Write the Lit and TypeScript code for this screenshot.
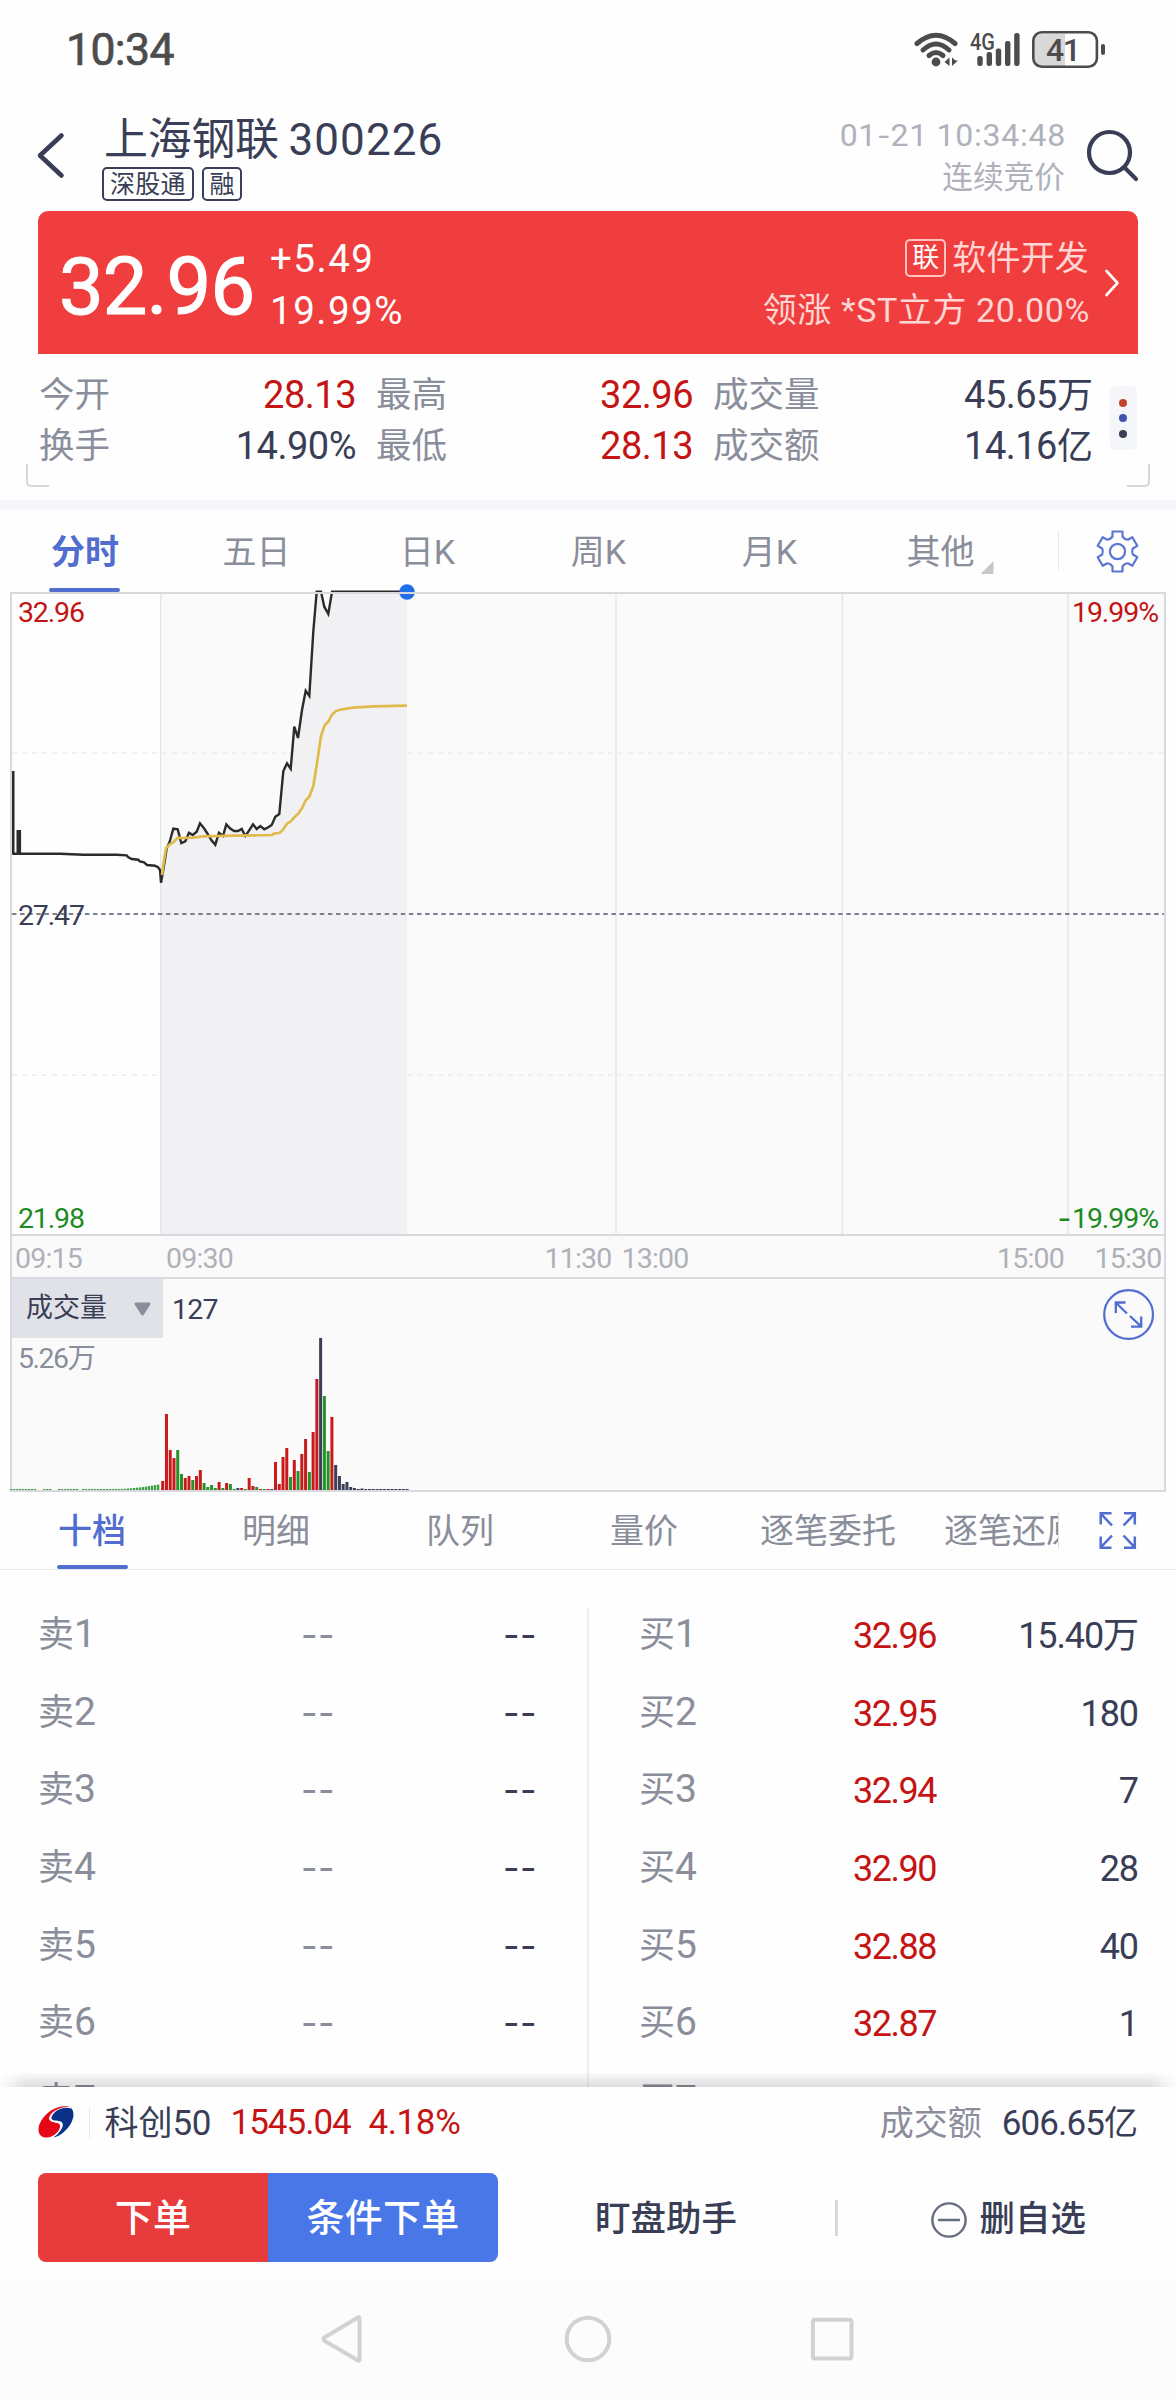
import { LitElement, html, svg, css } from "lit";
import { customElement } from "lit/decorators.js";

const BASE_FONT = css`
  font-family: Roboto, "Noto Sans CJK SC", "Liberation Sans", sans-serif;
`;

/* ---------- data ---------- */

const PRICE: [number, number][] = [
  [483, 908], [491, 862], [500, 805], [509, 785], [520, 746], [533, 748], [544, 789], [556, 784], [567, 758],
  [578, 765], [590, 755], [600, 730], [612, 745], [623, 762], [634, 780], [646, 794], [657, 758],
  [669, 768], [679, 733], [690, 745], [702, 753], [714, 753], [725, 747], [736, 768], [747, 752],
  [759, 733], [770, 747], [781, 738], [793, 748], [805, 742], [815, 735], [826, 710], [838, 702],
  [850, 574], [861, 550], [872, 566], [883, 440], [894, 474], [906, 390], [917, 332], [928, 348],
  [940, 155], [950, 35], [963, 35], [973, 80], [985, 102], [996, 35], [1221, 35],
];
const OPENING: [number, number][] = [
  [37, 821], [180, 821], [250, 824], [350, 824], [380, 826], [384, 831], [395, 837], [415, 839],
  [419, 844], [432, 847], [441, 855], [465, 857], [474, 862], [480, 870], [483, 908],
];
const AVERAGE: [number, number][] = [
  [486, 885], [492, 840], [498, 805], [510, 793], [523, 784], [533, 773], [545, 774], [580, 773], [610, 769],
  [700, 767], [815, 765], [826, 760], [838, 759], [848, 750], [861, 731], [872, 724], [883, 712],
  [894, 702], [906, 685], [917, 661], [928, 650], [940, 618], [951, 550], [963, 468], [974, 436],
  [985, 425], [996, 404], [1008, 393], [1025, 388], [1060, 383], [1120, 379], [1221, 377],
];
/* Series are stored in thirds of a pixel; the plot starts 12 px below their origin row. */
const toPoints = (s: [number, number][]) =>
  s.map(([x, y]) => `${(x / 3).toFixed(1)},${(y / 3 - 12).toFixed(1)}`).join(" ");

type Tone = "r" | "g" | "d";
const VOLUME: [Tone, number][] = [
  ["r", 9], ["r", 76], ["r", 40], ["r", 32], ["g", 40], ["g", 16], ["r", 12], ["r", 14], ["g", 10],
  ["r", 14], ["r", 20], ["g", 7], ["g", 3], ["g", 5], ["g", 2], ["r", 8], ["g", 2], ["r", 7], ["g", 6],
  ["g", 1], ["d", 2], ["r", 2], ["g", 1], ["r", 12], ["r", 4], ["g", 3], ["r", 1], ["g", 1], ["r", 1],
  ["d", 1], ["r", 28], ["r", 6], ["r", 33], ["r", 42], ["g", 13], ["r", 30], ["g", 19], ["r", 36],
  ["r", 51], ["g", 18], ["r", 58], ["r", 111], ["d", 152], ["g", 94], ["g", 39], ["r", 73], ["d", 25],
  ["d", 14], ["d", 6], ["d", 8], ["d", 3], ["d", 2], ["d", 1], ["d", 1.5], ["d", 1], ["d", 1], ["d", 1],
  ["d", 1], ["d", 1], ["d", 1], ["d", 1], ["d", 1], ["d", 1], ["d", 1], ["d", 1], ["d", 1],
];
const TONES: Record<Tone, string> = { r: "#c81a1a", g: "#25922a", d: "#3b4058" };

const BIDS = [
  ["32.96", "15.40万"], ["32.95", "180"], ["32.94", "7"], ["32.90", "28"],
  ["32.88", "40"], ["32.87", "1"],
];

/* ---------- status bar ---------- */

@customElement("status-bar")
class StatusBar extends LitElement {
  static styles = css`
    :host { display: flex; height: 100px; align-items: center; color: #4c4c4c; ${BASE_FONT} }
    .clock { flex: 1; padding-left: 66px; font-size: 44.5px; line-height: 102px; letter-spacing: -0.6px; -webkit-text-stroke: 0.7px #4c4c4c; }
    .icons { width: 262px; height: 100px; }
  `;
  render() {
    return html`
      <div class="clock">10:34</div>
      <svg class="icons" viewBox="914 0 262 100" fill="#4c4c4c">
        <g fill="none" stroke="#4c4c4c" stroke-width="5" stroke-linecap="round">
          <path d="M917 43.5 Q936 27 955 43.5" />
          <path d="M923 50 Q936 38 949 50" />
          <path d="M929 55.5 Q936 49.5 943 55.5" />
        </g>
        <circle cx="936" cy="62" r="4.4" />
        <path d="M949.5 57.5 V66 L944.5 62 Z M952 57.5 V66 L958 60.5 H955.5 Z" />
        <text x="970" y="49.5" font-family="Roboto" font-weight="500" font-size="23" textLength="25" lengthAdjust="spacingAndGlyphs">4G</text>
        <rect x="977.3" y="56" width="5.4" height="10" rx="2.2" />
        <rect x="986.6" y="52" width="5.4" height="14" rx="2.2" />
        <rect x="995.8" y="48.5" width="5.4" height="17.5" rx="2.2" />
        <rect x="1005" y="41" width="5.4" height="25" rx="2.2" />
        <rect x="1014.2" y="33" width="5.4" height="33" rx="2.2" />
        <path d="M1042 34 H1065 V66 H1042 Q1034 66 1034 58 V42 Q1034 34 1042 34Z" fill="#d8d8d8" />
        <rect x="1033.3" y="32.3" width="63.6" height="34.4" rx="8.5" fill="none" stroke="#4c4c4c" stroke-width="2.6" />
        <rect x="1101" y="44" width="4" height="11" rx="2" />
        <text x="1046" y="61" font-family="Roboto" font-weight="500" font-size="32" textLength="35">41</text>
      </svg>
    `;
  }
}

/* ---------- title row ---------- */

@customElement("stock-header")
class StockHeader extends LitElement {
  static styles = css`
    :host { display: flex; height: 111px; color: #393e56; ${BASE_FONT} }
    .back { width: 102px; height: 111px; }
    .main { flex: 1; }
    .name { height: 51px; padding: 14px 0 0 2px; font-size: 44px; line-height: 52px; letter-spacing: -0.3px; white-space: nowrap; }
    .code { letter-spacing: 1.1px; margin-left: -1px; }
    .tags { display: flex; gap: 8px; margin-top: 2px; }
    .tag { box-sizing: border-box; height: 34px; padding: 0 6px; border: 2px solid #393e56; border-radius: 5px;
      font-size: 25px; line-height: 31px; letter-spacing: 0.3px; }
    .tag.s { letter-spacing: 0; padding: 0 5.5px; }
    .when { display: flex; flex-direction: column; align-items: flex-end; color: #afb1bb; white-space: nowrap; }
    .time { margin: 14px -1px 0 0; font-size: 32px; line-height: 42px; letter-spacing: 0.75px; }
    .dash { font-family: Inter, sans-serif; font-size: 29px; letter-spacing: 0; }
    .phase { font-size: 30.7px; line-height: 42px; }
    .search { width: 111px; height: 111px; }
  `;
  render() {
    return html`
      <svg class="back" viewBox="0 100 102 111">
        <path d="M61.5 135.5 L40 155.5 L61.5 175.5" fill="none" stroke="#393e56" stroke-width="4.6" stroke-linecap="round" stroke-linejoin="round" />
      </svg>
      <div class="main">
        <div class="name">上海钢联 <span class="code">300226</span></div>
        <div class="tags"><span class="tag">深股通</span><span class="tag s">融</span></div>
      </div>
      <div class="when">
        <div class="time">01<span class="dash">-</span>21 10:34:48</div>
        <div class="phase">连续竞价</div>
      </div>
      <svg class="search" viewBox="1065 100 111 111" fill="none" stroke="#393e56" stroke-width="4.2" stroke-linecap="round">
        <circle cx="1109.5" cy="152.5" r="20.5" />
        <path d="M1124.5 167.5 L1136 179" />
      </svg>
    `;
  }
}

/* ---------- price card and key figures ---------- */

@customElement("quote-card")
class QuoteCard extends LitElement {
  static styles = css`
    :host { display: block; position: relative; height: 289px; color: #393e56; ${BASE_FONT} }
    .card { display: flex; box-sizing: border-box; height: 143px; margin: 0 38px; padding-left: 21px;
      background: #ef3e3d; color: #fff; border-radius: 10px 10px 0 0; white-space: nowrap; }
    .price { width: 211px; font-size: 79.5px; line-height: 151px; letter-spacing: -0.9px; -webkit-text-stroke: 1.1px #fff; }
    .delta { flex: 1; padding-top: 22px; font-size: 38.5px; line-height: 52px; letter-spacing: 1.5px; }
    .sector { padding-top: 21px; text-align: right; color: #ffd6d3; font-size: 34px; line-height: 52px; }
    .sector-name { display: flex; align-items: center; justify-content: flex-end; gap: 6px; height: 52px; letter-spacing: 0.2px; }
    .badge { box-sizing: border-box; width: 41px; height: 38px; border: 2px solid #ffc4c2; border-radius: 5px;
      font-size: 27px; line-height: 35px; letter-spacing: 0; color: #fff; text-align: center; }
    .lead { letter-spacing: 0.6px; margin-right: -1px; }
    .go { width: 49px; height: 143px; }
    .figures { display: grid; grid-template-columns: 317px 317px 380px; column-gap: 20px; padding: 16px 0 0 39px;
      grid-auto-rows: 51px; }
    .fig { display: flex; justify-content: space-between; font-size: 35.5px; line-height: 51px; white-space: nowrap; }
    .fig b { font-weight: 400; font-size: 38px; letter-spacing: -0.5px; }
    .fig i { font-style: normal; font-size: 36px; letter-spacing: 0; }
    .k { color: #8a8d9a; }
    .up { color: #c41413; }
    .more { position: absolute; left: 1109.5px; top: 175px; width: 27.5px; height: 64px; border-radius: 5px; background: #f5f6f9;
      display: flex; flex-direction: column; align-items: center; justify-content: center; gap: 7.5px; }
    .dot { width: 8px; height: 8px; border-radius: 50%; background: #3a3f56; }
    .dot.a { background: #c5412f; }
    .dot.b { background: #3d53ad; }
    .corner { position: absolute; box-sizing: border-box; top: 253px; width: 23px; height: 23px; border: 0 solid #d6d7dc; border-bottom-width: 2.5px; }
    .corner.l { left: 26px; border-left-width: 2.5px; border-bottom-left-radius: 5px; }
    .corner.r { left: 1127px; border-right-width: 2.5px; border-bottom-right-radius: 5px; }
  `;
  private fig(k: string, v: string, up = false, unit = "") {
    return html`<div class="fig"><span class="k">${k}</span><b class=${up ? "up" : ""}>${v}<i>${unit}</i></b></div>`;
  }
  render() {
    return html`
      <div class="card">
        <div class="price">32.96</div>
        <div class="delta"><div>+5.49</div><div>19.99%</div></div>
        <div class="sector">
          <div class="sector-name"><span class="badge">联</span><span>软件开发</span></div>
          <div class="lead">领涨 *ST立方 20.00%</div>
        </div>
        <svg class="go" viewBox="0 0 49 143">
          <path d="M17.5 60 L28.5 72 L17.5 84" fill="none" stroke="#fff" stroke-width="2.6" stroke-linecap="round" stroke-linejoin="round" />
        </svg>
      </div>
      <div class="figures">
        ${this.fig("今开", "28.13", true)}${this.fig("最高", "32.96", true)}${this.fig("成交量", "45.65", false, "万")}
        ${this.fig("换手", "14.90%")}${this.fig("最低", "28.13", true)}${this.fig("成交额", "14.16", false, "亿")}
      </div>
      <div class="more"><span class="dot a"></span><span class="dot b"></span><span class="dot"></span></div>
      <span class="corner l"></span><span class="corner r"></span>
    `;
  }
}

/* ---------- tab strips ---------- */

const gearPath = (() => {
  const at = (deg: number, r: number) => {
    const a = (deg * Math.PI) / 180;
    return `${(1117.5 + r * Math.cos(a)).toFixed(2)} ${(551.5 + r * Math.sin(a)).toFixed(2)}`;
  };
  const parts: string[] = [];
  for (let t = -90; t < 270; t += 60) {
    parts.push(`${at(t - 19, 15.6)} L${at(t - 14, 20.6)} L${at(t + 14, 20.6)} L${at(t + 19, 15.6)} Q${at(t + 30, 14)} ${at(t + 41, 15.6)}`);
  }
  return `M${parts.join(" L")}Z`;
})();

@customElement("period-tabs")
class PeriodTabs extends LitElement {
  static styles = css`
    :host { display: flex; height: 82px; border-top: 10px solid #f6f7fa; ${BASE_FONT} }
    .tabs { display: grid; grid-template-columns: repeat(6, 171px); width: 1027px; }
    .tab { position: relative; display: flex; justify-content: center; font-size: 34px; line-height: 85px; color: #8a8d9a; }
    .tab.on { color: #516dd0; font-weight: 600; padding-right: 1px; }
    .tab.on::after { content: ""; position: absolute; left: 49px; top: 78px; width: 71px; height: 4px; border-radius: 2px; background: #516dd0; }
    .mark { position: absolute; left: 125.5px; top: 51px; width: 13px; height: 13px; background: #c6c7c9; clip-path: polygon(100% 0, 100% 100%, 0 100%); }
    .tail { width: 149px; height: 82px; }
  `;
  render() {
    return html`
      <div class="tabs">
        <div class="tab on">分时</div><div class="tab">五日</div><div class="tab">日K</div>
        <div class="tab">周K</div><div class="tab">月K</div><div class="tab">其他<span class="mark"></span></div>
      </div>
      <svg class="tail" viewBox="1027 510 149 82" fill="none">
        <path d="M1058.5 532 V570" stroke="#e6e7eb" />
        <g stroke="#5b76d2" stroke-width="2.2" stroke-linejoin="round"><path d=${gearPath} /><circle cx="1117.5" cy="551.5" r="7.6" /></g>
      </svg>
    `;
  }
}

@customElement("depth-tabs")
class DepthTabs extends LitElement {
  static styles = css`
    :host { display: flex; box-sizing: border-box; height: 78px; border-bottom: 1px solid #e6e7eb; ${BASE_FONT} }
    .tabs { display: grid; grid-template-columns: repeat(6, 184px); width: 1058px; height: 77px; overflow: hidden; }
    .tab { position: relative; text-align: center; font-size: 34px; line-height: 79px; color: #8a8d9a; white-space: nowrap; }
    .tab.on { color: #516dd0; font-weight: 500; }
    .tab.on::after { content: ""; position: absolute; left: 57px; top: 73px; width: 71px; height: 4px; border-radius: 2px; background: #516dd0; }
    .tail { width: 118px; height: 77px; }
  `;
  render() {
    return html`
      <div class="tabs">
        <div class="tab on">十档</div><div class="tab">明细</div><div class="tab">队列</div>
        <div class="tab">量价</div><div class="tab">逐笔委托</div><div class="tab">逐笔还原</div>
      </div>
      <svg class="tail" viewBox="1058 1492 118 77" fill="none">
        <path d="M1058.5 1511 V1549" stroke="#dfe0e5" />
        <g stroke="#516dd0" stroke-width="2.5">
          <path d="M1111.5 1513.3 H1100.7 V1524.5 M1101 1513.8 L1112 1525.5" />
          <path d="M1124 1513.3 H1134.8 V1524.5 M1134.5 1513.8 L1123.5 1525.5" />
          <path d="M1111.5 1547.7 H1100.7 V1536.5 M1101 1547.2 L1112 1535.5" />
          <path d="M1124 1547.7 H1134.8 V1536.5 M1134.5 1547.2 L1123.5 1535.5" />
        </g>
      </svg>
    `;
  }
}

/* ---------- intraday chart ---------- */

@customElement("intraday-chart")
class IntradayChart extends LitElement {
  static styles = css`
    :host { display: block; height: 900px; ${BASE_FONT} }
    .plot { display: block; width: 1176px; height: 644px; overflow: visible; }
    .lbl { font-size: 28.5px; }
    .axis { display: flex; box-sizing: border-box; width: 1156px; height: 41px; margin-left: 10px; padding-left: 3px;
      border: solid #d8d9df; border-width: 0 2px; background: #fafafa; color: #afb1b8; font-size: 28.5px; line-height: 45px; letter-spacing: -0.8px; }
    .axis span { width: 68px; white-space: nowrap; }
    .g1 { margin-left: 83px; }
    .g2 { margin-left: 310.5px; }
    .g3 { margin-left: 9px; }
    .g4 { margin-left: 307.5px; }
    .g5 { margin-left: 29.5px; }
    .panel { box-sizing: border-box; width: 1156px; height: 215px; margin-left: 10px; border: 2px solid #d8d9df; background: #fafafa; }
    .head { display: flex; height: 59px; color: #393e56; }
    .pick { display: flex; align-items: center; justify-content: space-between; box-sizing: border-box; width: 151px; height: 59px; padding: 0 12px 0 14px;
      background: #e1e2e7; font-size: 27px; line-height: 61px; }
    .caret { width: 17px; height: 14px; }
    .val { flex: 1; padding-left: 9px; font-size: 28.5px; line-height: 61px; letter-spacing: -0.8px; }
    .zoom { width: 60px; height: 59px; overflow: visible; }
    .bars { display: block; width: 1152px; height: 152px; overflow: visible; }
  `;
  render() {
    const line = toPoints(PRICE);
    return html`
      <svg class="plot" viewBox="0 0 1176 644">
        <rect x="160.5" y="1" width="1005" height="642" fill="#fafafa" />
        <polygon points="${line} 407,642 161,642" fill="#f1f1f4" />
        <g stroke="#e3e4e8" stroke-width="1.3">
          <path d="M160.7 1V643 M616 1V643 M842.3 1V643 M1067.9 1V643" />
        </g>
        <g stroke="#ededf0" stroke-width="1.4" stroke-dasharray="5 5"><path d="M12 161H290 M408 161H1164 M12 483H160 M408 483H1164" /></g>
        <path d="M12 322H1164" stroke="#7d818f" stroke-width="1.8" stroke-dasharray="4.5 3.6" />
        <g fill="none" stroke="#2b2b2b" stroke-width="2.4" stroke-linejoin="miter">
          <path d="M13.2 179V262" stroke-width="2.6" />
          <path d="M18.8 238V262" stroke-width="4.6" />
          <polyline points=${toPoints(OPENING)} />
          <polyline points=${line} />
          <polyline points=${toPoints(AVERAGE)} stroke="#dfbb4c" stroke-width="2.7" stroke-linejoin="round" />
        </g>
        <circle cx="407" cy="0" r="7.8" fill="#1f6fea" />
        <rect x="11" y="1" width="1154" height="642" fill="none" stroke="#d8d9df" stroke-width="2" />
        <g class="lbl">
          <text x="18" y="30" fill="#c41413" textLength="67">32.96</text>
          <text x="1072" y="30" fill="#c41413" textLength="87">19.99%</text>
          <text x="18" y="333" fill="#393e56" textLength="67">27.47</text>
          <text x="18" y="636" fill="#1c8c22" textLength="67">21.98</text>
          <text x="1057.5" y="636.5" fill="#1c8c22" font-family="Inter" font-size="30">-</text>
          <text x="1072" y="636" fill="#1c8c22" textLength="87">19.99%</text>
        </g>
      </svg>
      <div class="axis">
        <span>09:15</span><span class="g1">09:30</span><span class="g2">11:30</span>
        <span class="g3">13:00</span><span class="g4">15:00</span><span class="g5">15:30</span>
      </div>
      <div class="panel">
        <div class="head">
          <div class="pick"><span>成交量</span>
            <svg class="caret" viewBox="0 0 17 14"><path d="M1.5 0.5H15.5Q17 1 16 3L10 12.5Q8.5 14.5 7 12.5L1 3Q0 1 1.5 0.5Z" fill="#8a8d9a" /></svg>
          </div>
          <div class="val">127</div>
          <svg class="zoom" viewBox="1104 1279 60 59" fill="none" stroke="#516dd0">
            <circle cx="1128.6" cy="1314.5" r="24.4" stroke-width="2.2" />
            <path d="M1125.5 1302.5H1115.8V1313 M1116 1302.8L1127 1313.5 M1131 1326.6H1141.2V1316.5 M1141 1326.4L1130 1316" stroke-width="2.3" />
          </svg>
        </div>
        <svg class="bars" viewBox="12 1338 1152 152">
          <text class="lbl" x="18" y="1368" fill="#8a8d9a" textLength="78">5.26万</text>
          ${Array.from({ length: 50 }, (_, i) => {
            const x = 10 + i * 3;
            if ((x > 36 && x < 41) || (x > 50 && x < 57) || (x > 78 && x < 82)) return "";
            const h = x < 118 ? 1 : 1 + Math.pow((x - 115) / 45, 1.8) * 5;
            return svg`<rect x=${x} y=${(1490 - h).toFixed(1)} width="2.3" height=${h.toFixed(1)} fill="#3c9f40" />`;
          })}
          ${VOLUME.map(
            ([tone, h], i) =>
              svg`<rect x=${(161.2 + 3.76 * i).toFixed(2)} y=${1490 - h} width="3" height=${h} fill=${TONES[tone]} />`,
          )}
        </svg>
      </div>
    `;
  }
}

/* ---------- order book ---------- */

@customElement("order-book")
class OrderBook extends LitElement {
  static styles = css`
    :host { display: flex; position: relative; height: 517px; overflow: hidden; ${BASE_FONT} }
    .side { box-sizing: border-box; width: 587px; padding: 26px 0 0 38px; }
    .side.buy { padding-left: 50px; }
    .split { width: 2px; height: 479px; margin-top: 38px; background: #f0f0f3; }
    .row { display: flex; height: 77.7px; font-size: 36px; line-height: 77.7px; white-space: nowrap; }
    .k { width: 215px; color: #8a8d9a; }
    .buy .k { width: 214px; }
    .k b { font-weight: 400; font-size: 39px; letter-spacing: 0.4px; }
    .none { font-family: Inter, sans-serif; color: #8a8d9a; width: 82px; padding-top: 1px; text-align: right; letter-spacing: 0.4px; }
    .none.q { flex: 1; padding-right: 50px; color: #393e56; }
    .p { width: 85px; color: #c41413; padding-top: 2px; letter-spacing: -1.5px; }
    .q2 { flex: 1; padding: 2px 38px 0 0; text-align: right; color: #393e56; letter-spacing: -1.1px; }
    .fade { position: absolute; left: 0; right: 0; bottom: 0; height: 14px;
      background: linear-gradient(to bottom, rgba(0,0,0,0.02), rgba(0,0,0,0.13));
      -webkit-mask-image: linear-gradient(to right, transparent, #000 26px, #000 1150px, transparent); }
  `;
  render() {
    return html`
      <div class="side">
        ${BIDS.map((_, i) => html`<div class="row"><span class="k">卖<b>${i + 1}</b></span><span class="none">--</span><span class="none q">--</span></div>`)}
        <div class="row"><span class="k">卖<b>7</b></span></div>
      </div>
      <div class="split"></div>
      <div class="side buy">
        ${BIDS.map(([p, q], i) => html`<div class="row"><span class="k">买<b>${i + 1}</b></span><span class="p">${p}</span><span class="q2">${q}</span></div>`)}
        <div class="row"><span class="k">买<b>7</b></span></div>
      </div>
      <div class="fade"></div>
    `;
  }
}

/* ---------- index ticker, actions, navigation ---------- */

@customElement("bottom-area")
class BottomArea extends LitElement {
  static styles = css`
    :host { display: block; height: 313px; color: #393e56; ${BASE_FONT} }
    .ticker { display: flex; height: 86px; padding: 0 38px; font-size: 34px; line-height: 72px; white-space: nowrap; }
    .logo { width: 66.5px; height: 69px; }
    .name { width: 126px; }
    .name b, .num { font-weight: 400; font-size: 35px; letter-spacing: -0.4px; }
    .up { color: #c41413; }
    .idx { width: 138px; letter-spacing: -1px; }
    .pct { flex: 1; }
    .num.amt { letter-spacing: -0.9px; }
    .k { color: #8a8d9a; padding-right: 20px; }
    .num i { font-style: normal; font-size: 34px; letter-spacing: 0; }
    .actions { display: flex; height: 89px; padding-left: 38px; line-height: 91px; font-weight: 500; white-space: nowrap; }
    .btn { width: 230px; height: 89px; text-align: center; color: #fff; font-size: 38px; letter-spacing: 0.2px; }
    .btn.red { background: #e73c3b; border-radius: 8px 0 0 8px; }
    .btn.blue { background: #4a77e8; border-radius: 0 8px 8px 0; }
    .act { font-size: 35.5px; line-height: 93px; }
    .watch { width: 240px; padding-left: 97px; }
    .bar { width: 3px; height: 36px; margin-top: 27px; background: #d8d9dc; }
    .minus { width: 36px; height: 36px; margin: 29px 13px 0 92.5px; }
    .nav { display: flex; height: 122px; margin-top: 16px; background: #fcfcfc; }
    .nav svg { width: 1176px; height: 122px; }
  `;
  render() {
    return html`
      <div class="ticker">
        <svg class="logo" viewBox="38 2087 66.5 69">
          <path d="M71 2107.2 C60 2103.5 45 2111 39.5 2124 C36 2134 42 2139.5 50 2137 C57 2134.5 63 2126.5 58.5 2123.5 C55 2122 49.5 2122.5 49 2118.5 C49.5 2112.5 60 2105.5 71 2107.2Z" fill="#e50715" />
          <path d="M71.5 2108.5 C62 2106 53.5 2111 51.5 2117.5 C51 2120.5 55 2120.5 59 2121 C66.5 2122.5 62 2131.5 53.5 2137.5 C64 2135.5 76.5 2121 72.8 2110.5Z" fill="#0a3087" />
          <path d="M89.5 2107V2138" stroke="#e8e9ec" />
        </svg>
        <span class="name">科创<b>50</b></span>
        <span class="num up idx">1545.04</span>
        <span class="num up pct">4.18%</span>
        <span class="k">成交额</span><span class="num amt">606.65<i>亿</i></span>
      </div>
      <div class="actions">
        <div class="btn red">下单</div><div class="btn blue">条件下单</div>
        <div class="act watch">盯盘助手</div>
        <span class="bar"></span>
        <svg class="minus" viewBox="0 0 36 36" fill="none" stroke="#666b7d" stroke-width="2.4">
          <circle cx="18" cy="18" r="16.6" /><path d="M8 18H28" stroke-linecap="round" />
        </svg>
        <div class="act">删自选</div>
      </div>
      <div class="nav">
        <svg viewBox="0 2278 1176 122" fill="none" stroke="#d2d2d2" stroke-width="4" stroke-linejoin="round">
          <path d="M359.5 2318 V2360 Q359.5 2361 358 2360.5 L324 2340.5 Q323 2339 324 2337.8 L358 2317.5 Q359.5 2317 359.5 2318Z" />
          <circle cx="588" cy="2339" r="21.3" />
          <rect x="812.9" y="2319.8" width="38.6" height="38.8" rx="2" />
        </svg>
      </div>
    `;
  }
}

@customElement("app-root")
class AppRoot extends LitElement {
  static styles = css`
    :host { display: flex; flex-direction: column; width: 1176px; height: 2400px; background: #fefefe; overflow: hidden; }
  `;
  render() {
    return html`
      <status-bar></status-bar>
      <stock-header></stock-header>
      <quote-card></quote-card>
      <period-tabs></period-tabs>
      <intraday-chart></intraday-chart>
      <depth-tabs></depth-tabs>
      <order-book></order-book>
      <bottom-area></bottom-area>
    `;
  }
}
